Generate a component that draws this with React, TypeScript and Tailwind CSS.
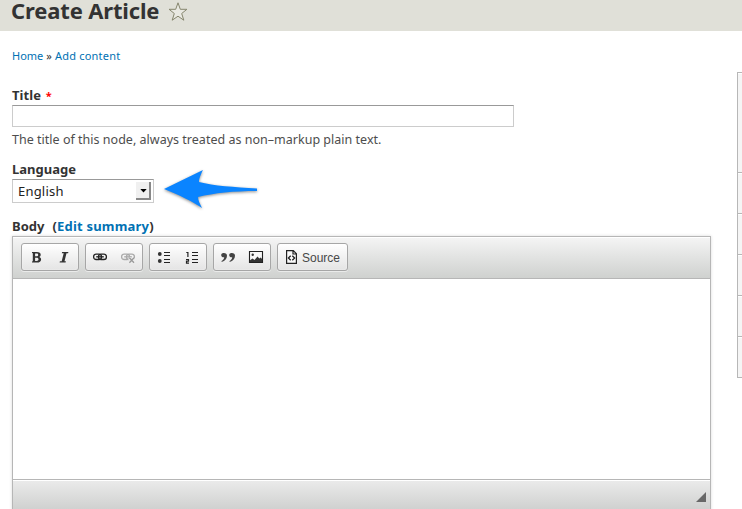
import type { ReactNode } from "react";

function Group({ width, children }: { width: string; children: ReactNode }) {
  return (
    <div
      className={`flex h-[28px] items-center rounded-[3px] border border-[#a6a6a6] bg-linear-to-b from-white to-[#e4e4e4] shadow-[0_1px_0_rgba(255,255,255,0.5),inset_0_0_2px_rgba(255,255,255,0.6)] ${width}`}
    >
      {children}
    </div>
  );
}

function Icon({ children }: { children: ReactNode }) {
  return (
    <svg viewBox="0 0 16 16" width="16" height="16" className="mr-[6px] ml-[6px] shrink-0">
      {children}
    </svg>
  );
}

function LinkShape({ color }: { color: string }) {
  return (
    <g fill="none" stroke={color} strokeWidth="1.3">
      <rect x="1.6" y="5.1" width="7.9" height="5.4" rx="2.6" />
      <rect x="6.5" y="5.1" width="7.9" height="5.4" rx="2.6" />
      <path d="M4.2 7.8h7.6" />
    </g>
  );
}

const sideRows = ["h-[100px]", "h-[41px]", "h-[41px]", "h-[41px]", "h-[41px]", "h-[41px]"];
const listLines = "M8 3H14V4H8ZM8 6H14V7H8ZM8 10H14V11H8ZM8 13H14V14H8Z";

export default function App() {
  return (
    <div className="h-[509px] w-[742px] overflow-hidden bg-white font-['Noto_Sans','Open_Sans',sans-serif] text-[#333]">
      <header className="flex h-[31px] items-start bg-[#e0e0d8] pl-[11px]">
        <h1 className="w-[157px] whitespace-nowrap text-[22px] leading-[20px] font-bold tracking-[-0.15px]">Create Article</h1>
        <svg width="20" height="20" viewBox="0 0 20 20" className="mt-[2px]">
          <path d="M10 .8L12.3 7.3H18.9L13.7 11.5L15.8 18.2L10 14.2L4.2 18.2L6.3 11.5L1.1 7.3H7.7Z" fill="#e9e9e2" stroke="#85856d" strokeWidth="1" />
        </svg>
      </header>
      <div className="flex justify-between">
        <main className="ml-[12px] w-[699px]">
          <nav className="mt-[17px] flex h-[16px] gap-[3px] whitespace-nowrap text-[11px] leading-[16px] text-[#0071b3]">
            <span>Home</span>
            <span className="text-[#333]">»</span>
            <span className="tracking-[0.22px]">Add content</span>
          </nav>
          <label className="mt-[22px] block h-[19px] whitespace-nowrap text-[13px] leading-[18px] font-bold tracking-[0.1px]">
            Title <span className="ml-[1px] text-[11px] text-[#f00]">*</span>
          </label>
          <div className="h-[22px] w-[502px] border border-[#ccc] border-t-[#999] bg-white" />
          <p className="mt-[4px] h-[18px] whitespace-nowrap text-[12.5px] leading-[18px] tracking-[0.015px] text-[#4d4d4d]">
            The title of this node, always treated as non–markup plain text.
          </p>
          <div className="mt-[11px] h-[19px] whitespace-nowrap text-[13px] leading-[18px] font-bold">Language</div>
          <div className="flex">
            <div className="flex h-[24px] w-[142px] items-center justify-between border border-[#ccc] border-t-[#999] pr-[2px] pl-[5px]">
              <span className="text-[13px] leading-[18px] tracking-[0.2px] text-[#222]">English</span>
              <span className="flex h-[18px] w-[15px] items-center justify-center border-r-2 border-b-2 border-r-[#888] border-b-[#888] bg-[#f0f0f0]">
                <svg width="7" height="4" viewBox="0 0 7 4" className="mt-[2px] ml-[1px]"><path d="M0.3 0H6.7L3.5 3.5Z" fill="#000" /></svg>
              </span>
            </div>
            <svg width="104" height="48" viewBox="0 0 104 48" className="-mt-[14px] -mb-[10px] ml-[5px] overflow-visible">
              <path
                d="M5 24L44 5C41 11 40 14 40 17C55 21 75 22 98 23.5V26C75 26 55 28 39 32C39 35 41 39 43 43C33 36 20 30 5 24Z"
                fill="#0a84ff"
                className="drop-shadow-[0_1px_1.5px_rgba(0,0,0,0.45)]"
              />
            </svg>
          </div>
          <div className="mt-[14px] flex h-[19px] whitespace-nowrap text-[13px] leading-[19px] font-bold">
            <span>Body</span>
            <span className="ml-[8px] tracking-[0.2px]">(<span className="text-[#0071b3]">Edit summary</span>)</span>
          </div>
          <section className="h-[290px] border border-[#b6b6b6] bg-white shadow-[0_0_3px_rgba(0,0,0,0.15)]">
            <div className="flex h-[42px] gap-[6px] border-b border-[#b6b6b6] bg-linear-to-b from-[#f5f5f5] to-[#cfd1cf] pt-[6px] pl-[8px] shadow-[inset_0_1px_0_white]">
              <Group width="w-[58px]">
                <Icon>
                  <path fillRule="evenodd" d="M4 3H8.8C11.4 3 12.7 4 12.7 5.7C12.7 6.8 12.1 7.6 11 7.9C12.4 8.2 13.1 9.1 13.1 10.4C13.1 12.5 11.5 13.5 9 13.5H4V12.6L4.8 12.2V4.3L4 4ZM7.1 4.5V7.3H8.4C9.6 7.3 10.2 6.8 10.2 5.9C10.2 5 9.6 4.5 8.4 4.5ZM7.1 8.7V12H8.6C9.9 12 10.5 11.4 10.5 10.3C10.5 9.2 9.9 8.7 8.6 8.7Z" fill="#333" />
                </Icon>
                <Icon><path d="M6.1 3H12.4L12.1 4.2H10.5L8.5 12.3H9.9L9.6 13.5H3.6L3.9 12.3H5.7L7.7 4.2H5.8Z" fill="#333" /></Icon>
              </Group>
              <Group width="w-[58px]">
                <Icon><LinkShape color="#222" /></Icon>
                <Icon><LinkShape color="#aaa" /><path d="M9 9L14.2 14M14.2 9L9 14" stroke="#eee" strokeWidth="3" /><path d="M9.4 8.8L14 13.8M14 8.8L9.4 13.8" stroke="#999" strokeWidth="1.3" /></Icon>
              </Group>
              <Group width="w-[58px]">
                <Icon>
                  <circle cx="3.8" cy="5" r="1.9" fill="#333" />
                  <circle cx="3.8" cy="12" r="1.9" fill="#333" />
                  <path d={listLines} fill="#222" />
                </Icon>
                <Icon>
                  <path d={listLines} fill="#222" />
                  <path d="M2.3 3.5H3.9V8M2 10.5H4.5V12.2H2.5V14.2H5" fill="none" stroke="#222" strokeWidth="1.2" />
                </Icon>
              </Group>
              <Group width="w-[58px]">
                <Icon>
                  <g fill="#444"><path id="quote" d="M3.8 4A2.2 2.2 0 1 0 4.2 8.2C4.1 9.8 3.2 11 1.6 12V13C5.2 12 7 9.5 7 6.7C7 5 5.8 4 3.8 4Z" /><use href="#quote" x="8" /></g>
                </Icon>
                <Icon><path d="M1.5 2.5H14.5V13.5H1.5Z" fill="#f7f7f7" stroke="#222" strokeWidth="1.1" /><path d="M2 13V11.3L4.5 9.5L6.5 11L9.5 7.5L11.3 9.5L12.8 8.5L14 10V13Z" fill="#333" /><circle cx="4.7" cy="5.7" r="1.2" fill="#333" /></Icon>
              </Group>
              <Group width="w-[71px]">
                <Icon><path d="M2.6 1.6H9.3L12.4 4.7V14.4H2.6Z M9 1.6V5H12.4" fill="#fafafa" stroke="#222" strokeWidth="1.2" /><path d="M6.7 6.7L4.4 9L6.7 11.3M8.3 6.7L10.6 9L8.3 11.3" fill="none" stroke="#222" strokeWidth="1.3" /></Icon>
                <span className="mt-[2px] -ml-[4px] font-['Liberation_Sans',sans-serif] text-[12px] text-[#484848]">Source</span>
              </Group>
            </div>
            <div className="h-[200px]" />
            <footer className="flex h-[47px] justify-end border-t border-[#b6b6b6] bg-linear-to-b from-[#ebebeb] to-[#c0c2c0] pt-[12px] pr-[4px] shadow-[inset_0_1px_0_white]">
              <svg width="10" height="10" viewBox="0 0 10 10"><path d="M10 0V10H0Z" fill="#686868" /></svg>
            </footer>
          </section>
        </main>
        <aside className="mt-[41px] h-[306px] w-[5px] border-t border-l border-[#b7b7b7] bg-[#f5f5f5]">
          {sideRows.map((h, i) => <div key={i} className={`border-b border-[#b7b7b7] shadow-[inset_0_1px_0_white] ${h}`} />)}
        </aside>
      </div>
    </div>
  );
}
